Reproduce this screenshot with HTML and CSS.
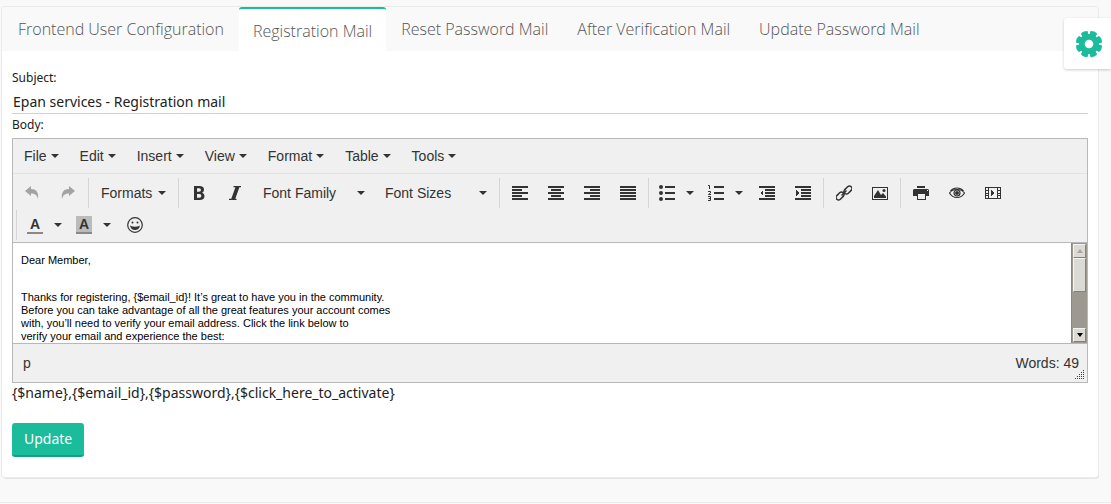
FILE: index.html
```html
<!DOCTYPE html>
<html lang="en">
<head>
<meta charset="utf-8">
<title>Registration Mail</title>
<link rel="stylesheet" href="styles.css">
</head>
<body>
<main class="card">
  <nav class="tabs">
    <a class="tab" href="#frontend">Frontend User Configuration</a>
    <a class="tab tab-active" href="#registration" aria-current="page">Registration Mail</a>
    <a class="tab" href="#reset">Reset Password Mail</a>
    <a class="tab" href="#verification">After Verification Mail</a>
    <a class="tab" href="#update">Update Password Mail</a>
  </nav>
  <form class="panel">
    <label class="label" for="subject">Subject:</label>
    <input class="subject" id="subject" type="text" value="Epan services - Registration mail">
    <label class="label" for="body">Body:</label>
    <div class="editor">
      <div class="menubar">
        <button class="menu caret" type="button">File</button>
        <button class="menu caret" type="button">Edit</button>
        <button class="menu caret" type="button">Insert</button>
        <button class="menu caret" type="button">View</button>
        <button class="menu caret" type="button">Format</button>
        <button class="menu caret" type="button">Table</button>
        <button class="menu caret" type="button">Tools</button>
      </div>
      <div class="toolbar">
        <div class="group">
          <button class="tool tool-off" type="button" aria-label="Undo"><svg class="icon" viewBox="0 0 16 16"><path d="M1 6 7 1V4C12 4 15 7 14 14C13 10 11 8.500 7 8.500V11Z"/></svg></button>
          <button class="tool tool-off" type="button" aria-label="Redo"><svg class="icon" viewBox="0 0 16 16"><path d="M15 6 9 1V4C4 4 1 7 2 14C3 10 5 8.500 9 8.500V11Z"/></svg></button>
        </div>
        <div class="group">
          <button class="menu menu-formats caret" type="button">Formats</button>
        </div>
        <div class="group">
          <button class="tool" type="button" aria-label="Bold"><svg class="icon" viewBox="0 0 16 16"><path fill-rule="evenodd" d="M3 1H8.500Q13 1 13 4.700Q13 6.900 11.200 7.700Q13.500 8.500 13.500 11Q13.500 15 8.800 15H3ZM6 3.300V6.800H8Q10 6.800 10 5T8 3.300ZM6 9V12.700H8.300Q10.400 12.700 10.400 10.800T8.300 9Z"/></svg></button>
          <button class="tool" type="button" aria-label="Italic"><svg class="icon" viewBox="0 0 16 16"><path d="M6.500 1H14V2.200H12.400L8.300 13.800H9.500V15H2V13.800H4.300L8.400 2.200H6.500Z"/></svg></button>
          <button class="menu menu-wide caret" type="button">Font Family</button>
          <button class="menu menu-wide caret" type="button">Font Sizes</button>
        </div>
        <div class="group">
          <button class="tool" type="button" aria-label="Align left"><svg class="icon sharp" viewBox="0 0 16 16"><path d="M0 1h16v2H0zM0 4h10v2H0zM0 7h16v2H0zM0 10h10v2H0zM0 13h16v2H0z"/></svg></button>
          <button class="tool" type="button" aria-label="Align center"><svg class="icon sharp" viewBox="0 0 16 16"><path d="M0 1h16v2H0zM3 4h10v2H3zM0 7h16v2H0zM3 10h10v2H3zM0 13h16v2H0z"/></svg></button>
          <button class="tool" type="button" aria-label="Align right"><svg class="icon sharp" viewBox="0 0 16 16"><path d="M0 1h16v2H0zM6 4h10v2H6zM0 7h16v2H0zM6 10h10v2H6zM0 13h16v2H0z"/></svg></button>
          <button class="tool" type="button" aria-label="Justify"><svg class="icon sharp" viewBox="0 0 16 16"><path d="M0 1h16v2H0zM0 4h16v2H0zM0 7h16v2H0zM0 10h16v2H0zM0 13h16v2H0z"/></svg></button>
        </div>
        <div class="group">
          <button class="split caret" type="button" aria-label="Bullet list"><svg class="icon" viewBox="0 0 16 16"><circle cx="2" cy="2" r="2"/><circle cx="2" cy="8" r="2"/><circle cx="2" cy="14" r="2"/><path d="M6 1h10v2H6zM6 7h10v2H6zM6 13h10v2H6z"/></svg></button>
          <button class="split caret" type="button" aria-label="Numbered list"><svg class="icon" viewBox="0 0 16 16"><path d="M6 1h10v2H6zM6 7h10v2H6zM6 13h10v2H6z"/><path fill="none" stroke="#333" d="M0 .5H1.500V4M0 6.500H2.500V8L.5 9.500H3M0 11.500H2.500V15.500H0M.5 13.500H2.500"/></svg></button>
          <button class="tool" type="button" aria-label="Decrease indent"><svg class="icon sharp" viewBox="0 0 16 16"><path d="M0 1h16v2H0zM6 4h10v2H6zM6 7h10v2H6zM6 10h10v2H6zM0 13h16v2H0zM4 5v6L1 8z"/></svg></button>
          <button class="tool" type="button" aria-label="Increase indent"><svg class="icon sharp" viewBox="0 0 16 16"><path d="M0 1h16v2H0zM6 4h10v2H6zM6 7h10v2H6zM6 10h10v2H6zM0 13h16v2H0zM1 5v6l3-3z"/></svg></button>
        </div>
        <div class="group">
          <button class="tool" type="button" aria-label="Insert link"><svg class="icon line" viewBox="0 0 16 16"><rect x="7.500" y="2.500" width="9" height="5" rx="2.500" transform="rotate(-45 12 5)"/><rect x="-.5" y="8.500" width="9" height="5" rx="2.500" transform="rotate(-45 4 11)"/><path d="M5.500 10.500l5-5"/></svg></button>
          <button class="tool" type="button" aria-label="Insert image"><svg class="icon" viewBox="0 0 16 16"><path fill-rule="evenodd" d="M0 2h16v13H0zM1 3v11h14V3z"/><path d="M2 13V11L6 5 9 10 11 8 14 11.500V13z"/><circle cx="12" cy="5.500" r="1.500"/></svg></button>
        </div>
        <div class="group">
          <button class="tool" type="button" aria-label="Print"><svg class="icon" viewBox="0 0 16 16"><path fill-rule="evenodd" d="M4 1h8v2H4zM1 4h14l1 1v6h-3v4H4v-4H0V5zM5 9v5h7V9zM14 5v1h1V5z"/></svg></button>
          <button class="tool" type="button" aria-label="Preview"><svg class="icon line-thin" viewBox="0 0 16 16"><path d="M.5 8Q3 4.500 8 4.500T15.500 8Q13 12.500 8 12.500T.5 8ZM1.500 6Q4 3 8 3T14.500 6"/><circle cx="8" cy="8" r="3"/><circle class="solid" cx="8" cy="8" r="2"/></svg></button>
          <button class="tool" type="button" aria-label="Insert media"><svg class="icon sharp" viewBox="0 0 16 16"><path fill-rule="evenodd" d="M0 2h16v12H0zM1 3v2h2V3zM1 6v2h2V6zM1 9v1h2V9zM1 11v2h2v-2zM4 3v10h8V3zM13 3v2h2V3zM13 6v2h2V6zM13 9v1h2V9zM13 11v2h2v-2z"/><path d="M6 5v6l4-3z"/></svg></button>
        </div>
        <div class="group group-wrapped">
          <button class="split caret" type="button" aria-label="Text color"><span class="swatch">A</span></button>
          <button class="split caret" type="button" aria-label="Background color"><span class="swatch swatch-filled">A</span></button>
          <button class="tool" type="button" aria-label="Emoticons"><svg class="icon line-thin" viewBox="0 0 16 16"><circle cx="8" cy="8" r="7.300"/><circle class="solid" cx="5.500" cy="5.500" r="1"/><circle class="solid" cx="10.500" cy="5.500" r="1"/><path class="solid" d="M3 8.500Q8 11 13 8.500Q12 13 8 13T3 8.500Z"/></svg></button>
        </div>
      </div>
      <div class="document">
        <div class="content" id="body" role="textbox" aria-multiline="true" contenteditable="true">
          <p>Dear Member,</p>
          <p>Thanks for registering, {$email_id}! It’s great to have you in the community.<br>Before you can take advantage of all the great features your account comes<br>with, you’ll need to verify your email address. Click the link below to<br>verify your email and experience the best:</p>
        </div>
        <div class="scrollbar">
          <button class="arrow arrow-up" type="button" aria-label="Scroll up"></button>
          <div class="thumb"></div>
          <button class="arrow arrow-down" type="button" aria-label="Scroll down"></button>
        </div>
      </div>
      <div class="status">
        <span>p</span>
        <span>Words: 49</span>
        <svg class="grip sharp" viewBox="0 0 10 10"><path d="M8 0h1v1H8zM6 2h1v1H6zM8 2h1v1H8zM4 4h1v1H4zM6 4h1v1H6zM8 4h1v1H8zM2 6h1v1H2zM4 6h1v1H4zM6 6h1v1H6zM8 6h1v1H8zM0 8h1v1H0zM2 8h1v1H2zM4 8h1v1H4zM6 8h1v1H6zM8 8h1v1H8z"/></svg>
      </div>
    </div>
    <p class="hint">{$name},{$email_id},{$password},{$click_here_to_activate}</p>
    <button class="update" type="submit">Update</button>
  </form>
</main>
<footer class="footer"></footer>
<button class="settings" type="button" aria-label="Settings">
  <svg class="gear" viewBox="-14 -14 28 28">
    <circle r="7.200" fill="none" stroke="#1abc9c" stroke-width="5.800"/>
    <g id="teeth">
      <path id="tooth" d="M-3.400 -8L-3.200 -10.500L-3.800 -12Q-3.600 -13 0 -13.400Q3.600 -13 3.800 -12L3.200 -10.500L3.400 -8Z" transform="rotate(22.500)"/>
      <use href="#tooth" transform="rotate(45)"/>
      <use href="#tooth" transform="rotate(90)"/>
      <use href="#tooth" transform="rotate(135)"/>
    </g>
    <use href="#teeth" transform="rotate(180)"/>
  </svg>
</button>
</body>
</html>
```
FILE: styles.css
```css
* {
  box-sizing: border-box;
}

body {
  margin: 0;
  background: #f9f9f9;
  color: #212121;
  font: 14px/20px "Noto Sans", "Open Sans", sans-serif;
}

button {
  margin: 0;
  padding: 0;
  border: 0;
  background: none;
  color: inherit;
  font: inherit;
}

.card {
  margin: 7px 13px 0 2px;
  border-radius: 3px;
  background: #fff;
  box-shadow: 0 0 0 1px #ebebeb, 1px 2px 0 #e6e6e6;
}

.tabs {
  display: flex;
  gap: 1px;
  height: 44px;
  padding-left: 2px;
  border-radius: 3px 3px 0 0;
  background: #f9f9f9;
}

.tab {
  padding: 0 14px;
  border-radius: 3px 3px 0 0;
  color: #555;
  font: 300 16px/44px "Open Sans", sans-serif;
  text-decoration: none;
}

.tab-active {
  border-top: 2px solid #1abc9c;
  background: #fff;
}

.panel {
  display: flex;
  flex-direction: column;
  padding: 18px 10px 20px;
}

.label {
  font-size: 12px;
  line-height: 18px;
}

.subject {
  width: 100%;
  height: 27px;
  margin-bottom: 2px;
  padding: 5px 1px 3px;
  border: 0;
  border-bottom: 1px solid #d2d2d2;
  background: none;
  color: #212121;
  font: inherit;
}

.editor {
  margin-top: 4px;
  border: 1px solid #b8b8b8;
  background: #f0f0f0;
  color: #333;
  font: 14px/20px "Liberation Sans", Arial, sans-serif;
}

.menubar {
  display: flex;
  gap: 1px;
  padding: 2px 1px 2px;
  border-bottom: 1px solid #e2e2e2;
}

.menu {
  display: flex;
  align-items: center;
  gap: 4px;
  height: 30px;
  padding: 0 10px;
}

.menu-formats,
.menu-wide {
  justify-content: space-between;
}

.menu-formats {
  width: 85px;
}

.menu-wide {
  width: 122px;
}

.caret::after {
  content: "";
  border: 4px solid transparent;
  border-top-color: #333;
  border-bottom: 0;
}

.toolbar {
  display: flex;
  flex-wrap: wrap;
  row-gap: 2px;
  padding: 4px 0 2px;
}

.group {
  display: flex;
  padding: 0 2px;
  border-left: 1px solid #d6d6d6;
}

.group:first-child {
  padding-left: 1px;
  border-left: 0;
}

.group-wrapped {
  margin-left: 3px;
}

.tool {
  display: flex;
  align-items: center;
  justify-content: center;
  width: 36px;
  height: 30px;
}

.tool-off {
  opacity: .4;
}

.split {
  display: flex;
  align-items: center;
  justify-content: space-between;
  width: 49px;
  height: 30px;
  padding: 0 6px 0 8px;
}

.icon {
  width: 16px;
  height: 16px;
  fill: #333;
}

.sharp {
  shape-rendering: crispEdges;
}

.line,
.line-thin {
  fill: none;
  stroke: #333;
  stroke-width: 1.5;
}

.line-thin {
  stroke-width: 1.2;
}

.solid {
  fill: #333;
  stroke: none;
}

.swatch {
  width: 16px;
  height: 18px;
  border-bottom: 2px solid #888;
  font-weight: bold;
  line-height: 16px;
  text-align: center;
}

.swatch-filled {
  background: #bbb;
}

.document {
  display: flex;
  height: 102px;
  border: solid #b8b8b8;
  border-width: 1px 0;
  background: #fff;
}

.content {
  flex: 1;
  overflow: hidden;
  padding: 11px 8px 0;
  color: #000;
  font-size: 11px;
  line-height: 13px;
}

.content p {
  margin: 0 0 24px;
}

.scrollbar {
  display: flex;
  flex-direction: column;
  width: 16px;
  padding: 1px;
  border-left: 1px solid #888;
  background: #9e9990;
}

.arrow,
.thumb {
  border: 1px solid;
  border-color: #f4f4f2 #85827a #85827a #f4f4f2;
  background: #dcdad5;
}

.arrow {
  display: flex;
  align-items: center;
  justify-content: center;
  height: 14px;
}

.arrow::after {
  content: "";
  border: 3px solid transparent;
}

.arrow-up::after {
  border-top: 0;
  border-bottom: 4px solid #aaa69d;
}

.arrow-down {
  margin-top: auto;
}

.arrow-down::after {
  border-top: 4px solid #000;
  border-bottom: 0;
}

.thumb {
  height: 34px;
}

.status {
  position: relative;
  display: flex;
  justify-content: space-between;
  padding: 9px 8px 9px 10px;
}

.grip {
  position: absolute;
  right: 2px;
  bottom: 2px;
  width: 10px;
  height: 10px;
  fill: #444;
}

.hint {
  margin: 0 0 20px;
}

.update {
  align-self: flex-start;
  padding: 6px 12px;
  border-bottom: 2px solid #16a085;
  border-radius: 3px;
  background: #1abc9c;
  color: #fff;
}

.footer {
  margin-top: 25px;
  border-top: 1px solid #e7ebee;
}

.settings {
  position: fixed;
  top: 18px;
  right: 0;
  display: flex;
  align-items: center;
  padding: 12px 8px 11px 11px;
  border-radius: 3px 0 0 3px;
  background: #fff;
  box-shadow: 0 1px 3px rgba(0, 0, 0, .2);
}

.gear {
  width: 28px;
  height: 28px;
  fill: #1abc9c;
}
```
